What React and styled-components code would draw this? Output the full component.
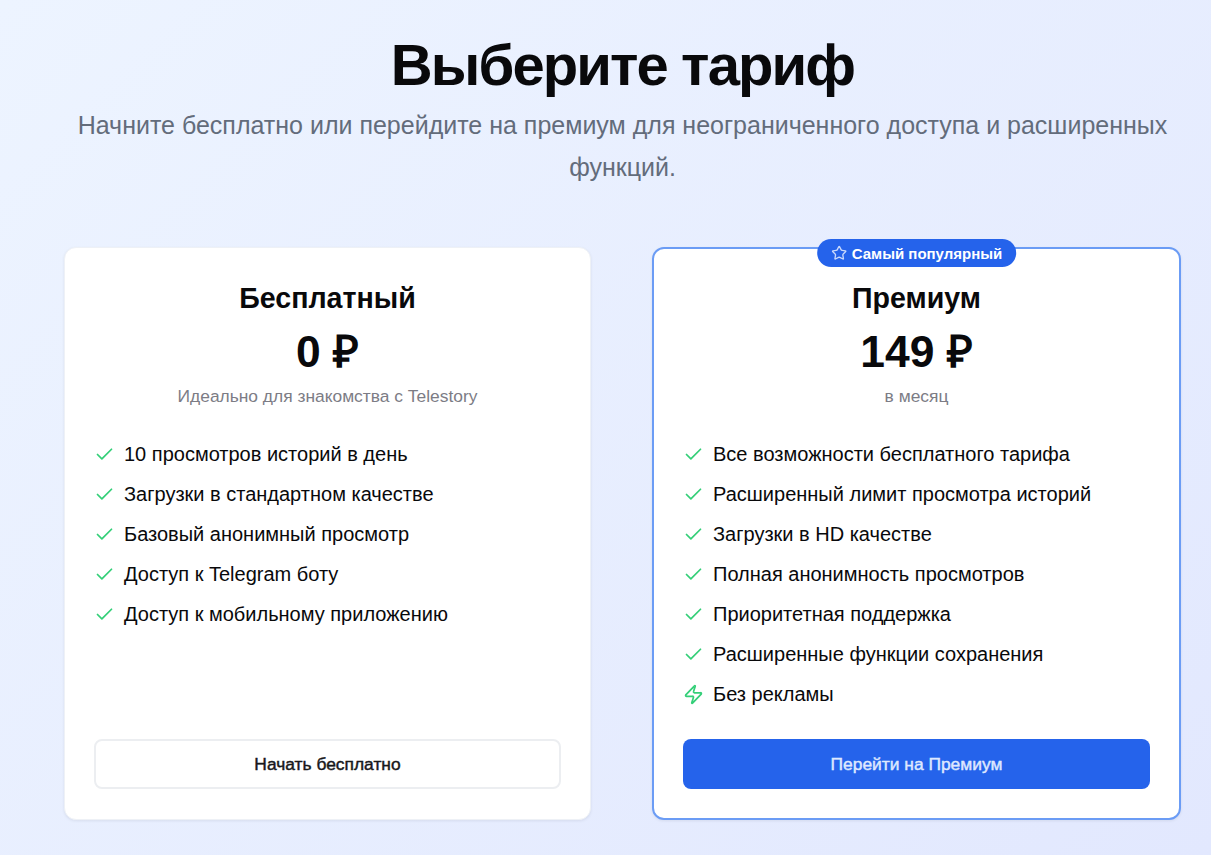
import React from "react";
import styled, { createGlobalStyle } from "styled-components";
import { Check, Star, Zap } from "lucide-react";

const freeFeatures = [
  "10 просмотров историй в день",
  "Загрузки в стандартном качестве",
  "Базовый анонимный просмотр",
  "Доступ к Telegram боту",
  "Доступ к мобильному приложению",
];

const premiumFeatures = [
  "Все возможности бесплатного тарифа",
  "Расширенный лимит просмотра историй",
  "Загрузки в HD качестве",
  "Полная анонимность просмотров",
  "Приоритетная поддержка",
  "Расширенные функции сохранения",
];

const GlobalStyle = createGlobalStyle`
  html, body {
    margin: 0;
    padding: 0;
  }
  body {
    font-family: "Liberation Sans", Arial, sans-serif;
    background: #eaf1fe;
  }
`;

const Page = styled.div`
  box-sizing: border-box;
  height: 855px;
  overflow: hidden;
  padding: 30px 30px 0 64px;
  background: linear-gradient(135deg, #edf4ff 0%, #e2e8fe 100%);
`;

const Header = styled.header`
  text-align: center;
  margin-bottom: 59px;
`;

const Title = styled.h1`
  margin: 0 0 4px;
  font-size: 58px;
  line-height: 70px;
  font-weight: 700;
  letter-spacing: -1.9px;
  color: #09090b;
`;

const Subtitle = styled.p`
  margin: 0;
  font-size: 25px;
  line-height: 42px;
  color: #636c7b;
`;

const Plans = styled.div`
  display: grid;
  grid-template-columns: 527px 529px;
  gap: 61px;
`;

const Card = styled.section`
  position: relative;
  box-sizing: border-box;
  height: 573px;
  display: flex;
  flex-direction: column;
  padding: ${(p) => (p.$featured ? "30px 29px 29px" : "31px 29px 30px")};
  background: #fff;
  border-radius: 12px;
  border: ${(p) => (p.$featured ? "2px solid #6b9cf5" : "1px solid #eef1f6")};
  box-shadow: 0 1px 3px rgba(15, 23, 42, 0.08);
`;

const Badge = styled.div`
  position: absolute;
  top: -10px;
  left: 50%;
  transform: translateX(-50%);
  display: flex;
  align-items: center;
  gap: 5px;
  height: 28px;
  padding: 0 14px;
  border-radius: 14px;
  background: #2563eb;
  color: #fff;
  font-size: 15px;
  font-weight: 700;
  white-space: nowrap;
  svg {
    color: #c9d8fb;
  }
`;

const PlanHead = styled.div`
  text-align: center;
  margin-bottom: 31px;
`;

const PlanName = styled.h2`
  margin: 0;
  font-size: 28.6px;
  line-height: 38px;
  font-weight: 700;
  color: #09090b;
`;

const Price = styled.div`
  margin-top: 10px;
  font-size: 44.4px;
  line-height: 50px;
  font-weight: 700;
  color: #09090b;
`;

const PriceNote = styled.p`
  margin: 7px 0 0;
  font-size: 17.4px;
  line-height: 24px;
  color: #7c7c85;
`;

const Features = styled.ul`
  flex: 1;
  margin: 0;
  padding: 0;
  list-style: none;
  display: flex;
  flex-direction: column;
  gap: 10px;
`;

const Feature = styled.li`
  display: flex;
  align-items: center;
  gap: 9px;
  height: 30px;
  font-size: 20px;
  color: #09090b;
  svg {
    flex: none;
    color: #34cf78;
  }
`;

const Action = styled.button`
  height: 50px;
  padding: 1px 0 0;
  border-radius: 8px;
  font-family: "Liberation Sans", Arial, sans-serif;
  font-size: 17.4px;
  font-weight: 400;
  -webkit-text-stroke: 0.45px currentColor;
  cursor: pointer;
  border: ${(p) => (p.$primary ? "none" : "2px solid #eceef1")};
  background: ${(p) => (p.$primary ? "#2563eb" : "#fff")};
  color: ${(p) => (p.$primary ? "#dfe8ff" : "#18181b")};
`;

const App = () => {
  return (
    <Page>
      <GlobalStyle />
      <Header>
        <Title>Выберите тариф</Title>
        <Subtitle>
          Начните бесплатно или перейдите на премиум для неограниченного доступа и расширенных функций.
        </Subtitle>
      </Header>
      <Plans>
        <Card>
          <PlanHead>
            <PlanName>Бесплатный</PlanName>
            <Price>0 ₽</Price>
            <PriceNote>Идеально для знакомства с Telestory</PriceNote>
          </PlanHead>
          <Features>
            {freeFeatures.map((text) => (
              <Feature key={text}>
                <Check size={21} />
                {text}
              </Feature>
            ))}
          </Features>
          <Action>Начать бесплатно</Action>
        </Card>
        <Card $featured>
          <Badge>
            <Star size={16} />
            Самый популярный
          </Badge>
          <PlanHead>
            <PlanName>Премиум</PlanName>
            <Price>149 ₽</Price>
            <PriceNote>в месяц</PriceNote>
          </PlanHead>
          <Features>
            {premiumFeatures.map((text) => (
              <Feature key={text}>
                <Check size={21} />
                {text}
              </Feature>
            ))}
            <Feature>
              <Zap size={21} />
              Без рекламы
            </Feature>
          </Features>
          <Action $primary>Перейти на Премиум</Action>
        </Card>
      </Plans>
    </Page>
  );
};

export default App;
